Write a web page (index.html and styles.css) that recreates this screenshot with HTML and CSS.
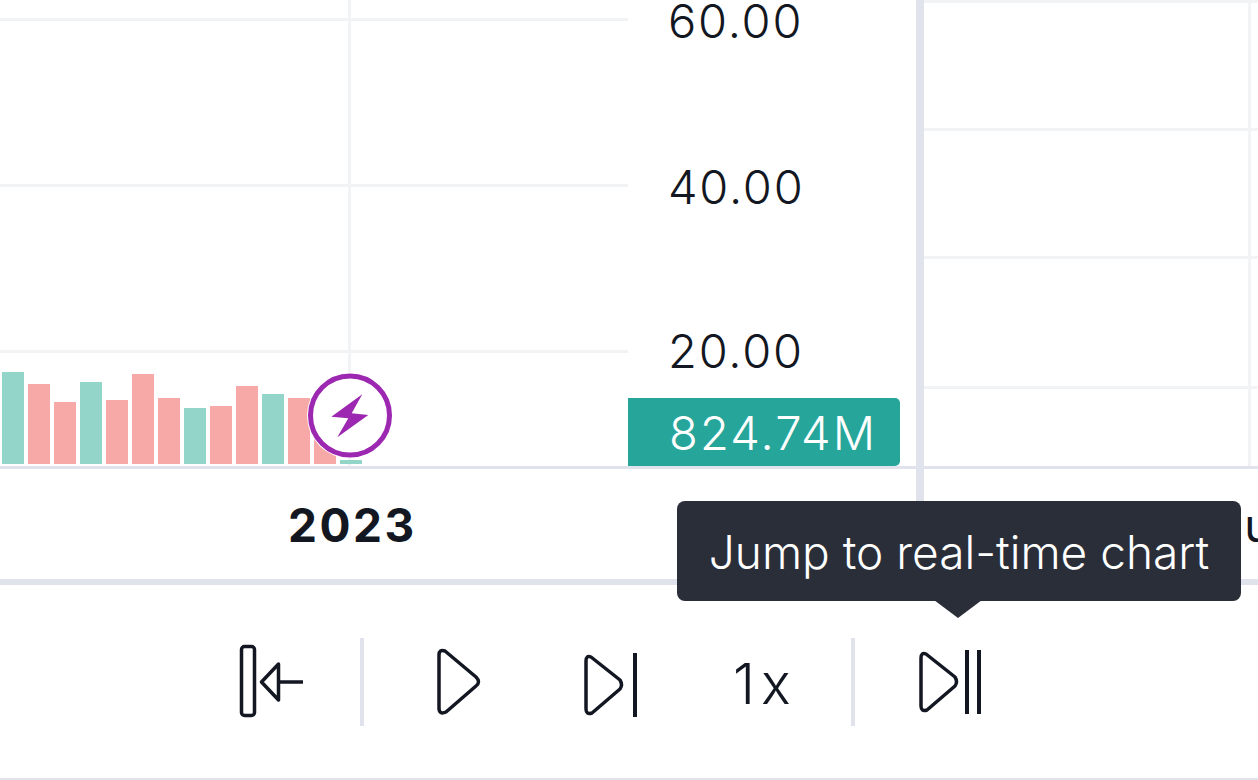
FILE: index.html
```html
<!DOCTYPE html>
<html lang="en">
<head>
    <meta charset="UTF-8">
    <title>Bar replay chart</title>
    <link rel="stylesheet" href="styles.css">
</head>
<body>
    <div class="layout">
        <div class="chart-area">
            <div class="pane pane-main">
                <div class="plot">
                    <div class="grid-h" style="top: 18px"></div>
                    <div class="grid-h" style="top: 184px"></div>
                    <div class="grid-h" style="top: 350px"></div>
                    <div class="grid-v" style="left: 348px"></div>
                    <div class="volume">
                        <div class="bar up" style="height: 92px"></div>
                        <div class="bar down" style="height: 80px"></div>
                        <div class="bar down" style="height: 62px"></div>
                        <div class="bar up" style="height: 82px"></div>
                        <div class="bar down" style="height: 64px"></div>
                        <div class="bar down" style="height: 90px"></div>
                        <div class="bar down" style="height: 66px"></div>
                        <div class="bar up" style="height: 56px"></div>
                        <div class="bar down" style="height: 58px"></div>
                        <div class="bar down" style="height: 78px"></div>
                        <div class="bar up" style="height: 70px"></div>
                        <div class="bar down" style="height: 66px"></div>
                        <div class="bar down" style="height: 34px"></div>
                        <div class="bar up" style="height: 4px"></div>
                    </div>
                    <svg class="event-marker" width="88" height="88" viewBox="0 0 88 88">
                        <circle cx="44" cy="43.500" r="43" fill="#fff"/>
                        <circle cx="44" cy="43.500" r="39.500" fill="#fff" stroke="#9c27b0" stroke-width="5"/>
                        <path d="M56.300 22.300 25.300 44.700 42.300 46.300 31.300 65.300 62.300 43 45.700 41.300Z" fill="#9c27b0"/>
                    </svg>
                </div>
                <div class="price-axis">
                    <span class="price" style="top: 21px">60.00</span>
                    <span class="price" style="top: 187px">40.00</span>
                    <span class="price" style="top: 351px">20.00</span>
                    <div class="price-tag">824.74M</div>
                </div>
                <div class="time-axis">
                    <span class="year">2023</span>
                </div>
            </div>
            <div class="pane pane-side">
                <div class="side-plot">
                    <div class="grid-h" style="top: 0"></div>
                    <div class="grid-h" style="top: 128px"></div>
                    <div class="grid-h" style="top: 256px"></div>
                    <div class="grid-h" style="top: 386px"></div>
                    <div class="grid-v" style="left: 324px"></div>
                </div>
                <div class="side-axis">
                    <span class="side-label">Jun</span>
                </div>
            </div>
        </div>

        <div class="toolbar">
            <button class="tool tool-start">
                <svg width="66" height="76" viewBox="0 0 66 76">
                    <rect x="2.500" y="2.500" width="13" height="69" rx="3"/>
                    <path d="M39.500 20 22.500 38 39.500 56ZM39.500 38H64"/>
                </svg>
            </button>
            <div class="divider"></div>
            <button class="tool tool-play">
                <svg width="46" height="68" viewBox="0 0 46 68">
                    <path d="M2 7Q2 1 8 3L39 29Q44 34 39 38L9 64Q2 67 2 60Z"/>
                </svg>
            </button>
            <button class="tool tool-step">
                <svg width="56" height="66" viewBox="0 0 56 66">
                    <path d="M2 8Q2 2 7 4L36 27Q39 32 36 36L8 60Q2 62 2 56Z"/>
                    <path class="thick" d="M51 0V64"/>
                </svg>
            </button>
            <span class="speed">1x</span>
            <div class="divider divider-last"></div>
            <button class="tool tool-realtime">
                <svg width="62" height="66" viewBox="0 0 62 66">
                    <path d="M2 8Q2 2 7 4L36 27Q39 32 36 36L8 60Q2 62 2 56Z"/>
                    <path class="thick" d="M48 0V64M60 0V64"/>
                </svg>
            </button>
        </div>
    </div>

    <div class="tooltip">Jump to real-time chart</div>
</body>
</html>
```

FILE: styles.css
```css
:root {
    --text: #131722;
    --line: #e0e3eb;
    --grid: #f1f3f4;
    --teal: #26a69a;
}

* {
    margin: 0;
    padding: 0;
    box-sizing: border-box;
    font-family: 'Inter', sans-serif;
}

html, body {
    height: 100%;
    overflow: hidden;
    background: white;
    color: var(--text);
}

.layout {
    height: 780px;
    display: flex;
    flex-direction: column;
    border-bottom: 2px solid var(--line);
}

/* Chart */
.chart-area {
    height: 585px;
    display: flex;
    border-bottom: 6px solid var(--line);
}

.pane-main {
    width: 924px;
    display: grid;
    grid-template-columns: 628px 288px;
    grid-template-rows: 466px 1fr;
    border-right: 8px solid var(--line);
}

.pane-side {
    flex: 1;
    display: grid;
    grid-template-rows: 466px 1fr;
    overflow: hidden;
}

.plot, .side-plot, .price-axis {
    position: relative;
}

.side-plot {
    overflow: hidden;
}

.grid-h {
    position: absolute;
    left: 0;
    right: 0;
    height: 3px;
    background: var(--grid);
}

.grid-v {
    position: absolute;
    top: 0;
    bottom: 0;
    width: 3px;
    background: var(--grid);
}

.volume {
    position: absolute;
    left: 2px;
    bottom: 2px;
    display: flex;
    align-items: flex-end;
    gap: 4px;
}

.bar {
    width: 22px;
}

.bar.up {
    background: #94d5ca;
}

.bar.down {
    background: #f7a9a7;
}

.event-marker {
    position: absolute;
    left: 306px;
    top: 372px;
}

.price-axis {
    font-size: 47px;
    font-weight: 300;
}

.price {
    position: absolute;
    left: 40px;
    line-height: 36px;
    transform: translateY(-50%);
    letter-spacing: 1.800px;
}

.price-tag {
    position: absolute;
    left: 0;
    top: 398px;
    width: 272px;
    height: 68px;
    padding-left: 41px;
    line-height: 70px;
    background: var(--teal);
    color: white;
    border-radius: 0 5px 5px 0;
    letter-spacing: 2.200px;
}

.time-axis {
    grid-column: 1 / 3;
    border-top: 3px solid var(--line);
    padding-left: 288px;
}

.year {
    display: block;
    font-size: 46px;
    font-weight: 700;
    line-height: 112px;
    letter-spacing: 2.500px;
}

.side-axis {
    border-top: 3px solid var(--line);
    padding-left: 294px;
}

.side-label {
    display: block;
    font-size: 46px;
    line-height: 112px;
}

/* Replay controls */
.toolbar {
    flex: 1;
    display: flex;
    align-items: flex-start;
    padding-left: 239px;
}

.tool {
    background: none;
    border: none;
    display: block;
    cursor: pointer;
}

.tool svg {
    display: block;
    fill: none;
    stroke: var(--text);
    stroke-width: 3.500;
    stroke-linejoin: round;
}

.tool .thick {
    stroke-width: 4;
}

.tool-start {
    margin-top: 59px;
}

.divider {
    width: 4px;
    height: 88px;
    margin: 53px 0 0 55px;
    background: var(--line);
}

.tool-play {
    margin: 63px 0 0 73px;
}

.tool-step {
    margin: 68px 0 0 101px;
}

.speed {
    margin: 69px 0 0 93px;
    font-size: 56px;
    font-weight: 300;
    line-height: 60px;
    letter-spacing: 6px;
}

.divider-last {
    margin-left: 54px;
}

.tool-realtime {
    margin: 65px 0 0 64px;
}

.tooltip {
    position: absolute;
    left: 677px;
    top: 501px;
    width: 564px;
    height: 100px;
    background: #2a2e39;
    color: white;
    border-radius: 8px;
    font-size: 46px;
    font-weight: 300;
    line-height: 102px;
    text-align: center;
}

.tooltip:after {
    content: "";
    position: absolute;
    left: 257px;
    top: 99px;
    border-left: 24px solid transparent;
    border-right: 24px solid transparent;
    border-top: 18px solid #2a2e39;
}
```
